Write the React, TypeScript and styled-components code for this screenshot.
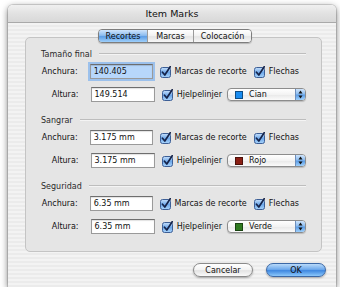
import React from 'react';
import styled, { createGlobalStyle } from 'styled-components';

const GlobalStyle = createGlobalStyle`
  html, body {
    margin: 0;
    padding: 0;
    background: #ffffff;
  }
  body {
    font-family: "DejaVu Sans", "Liberation Sans", sans-serif;
    font-size: 8px;
    color: #111;
  }
`;

const Window = styled.div`
  margin: 5px 0 0 8px;
  width: 328px;
  height: 282px;
  display: flex;
  flex-direction: column;
  border-radius: 5px 5px 0 0;
  box-shadow: 0 2px 7px rgba(0, 0, 0, 0.55), 0 0 0 1px rgba(0, 0, 0, 0.12);
  overflow: hidden;
`;

const TitleBar = styled.div`
  height: 17px;
  flex: 0 0 auto;
  display: flex;
  align-items: center;
  justify-content: center;
  font-size: 9.5px;
  background: linear-gradient(#f0f0f0, #e2e2e2 50%, #d8d8d8);
  border-bottom: 1px solid #a9a9a9;
`;

const Body = styled.div`
  flex: 1 0;
  display: flex;
  flex-direction: column;
  padding: 6px 14px 0 17px;
  background: repeating-linear-gradient(#f3f3f3 0 2px, #ebebeb 2px 4px);
`;

const TabBar = styled.div`
  display: flex;
  justify-content: center;
  margin-bottom: -6px;
  position: relative;
  z-index: 1;
  padding-left: 3px;
`;

const TabGroup = styled.div`
  display: flex;
  height: 12px;
  border: 1px solid #7d7d7d;
  border-radius: 4px;
  overflow: hidden;
  box-shadow: 0 1px 1px rgba(0, 0, 0, 0.2);
`;

const Tab = styled.div<{ $active?: boolean; $w: number }>`
  width: ${p => p.$w}px;
  display: flex;
  align-items: center;
  justify-content: center;
  font-size: 8px;
  border-left: 1px solid #9a9a9a;
  &:first-child { border-left: none; }
  background: ${p => p.$active
    ? 'linear-gradient(#cfe4fb, #8dbdf0 45%, #5c9de6 55%, #9fd0fb)'
    : 'linear-gradient(#ffffff, #f1f1f1 50%, #e4e4e4 55%, #f7f7f7)'};
`;

const Panel = styled.div`
  width: 297px;
  height: 215px;
  box-sizing: border-box;
  padding: 10px 15px 0 15px;
  background: #e5e5e5;
  border: 1px solid #c4c4c4;
  border-radius: 5px;
  display: flex;
  flex-direction: column;
  gap: 12px;
`;

const Group = styled.div`
  display: flex;
  flex-direction: column;
`;

const GroupHead = styled.div`
  height: 12px;
  display: flex;
  align-items: center;
  gap: 7px;
  color: #2a2a2a;
  margin-bottom: 4px;
`;

const Rule = styled.div`
  flex: 1 0;
  height: 1px;
  background: #bdbdbd;
  border-bottom: 1px solid #f4f4f4;
`;

const Row = styled.div`
  height: 15px;
  display: flex;
  align-items: center;
  & + & { margin-top: 8px; }
`;

const Label = styled.div`
  width: 38px;
  text-align: right;
  margin-right: 12px;
`;

const Field = styled.div<{ $focus?: boolean }>`
  width: 65px;
  height: 15px;
  box-sizing: border-box;
  display: flex;
  align-items: center;
  padding-left: 3px;
  border: 1px solid #9a9a9a;
  border-top-color: #6e6e6e;
  background: ${p => (p.$focus ? '#b7d7fb' : '#ffffff')};
  box-shadow: ${p => (p.$focus
    ? '0 0 0 2px #9cc1ec, inset 0 1px 1px rgba(0,0,0,0.15)'
    : 'inset 0 1px 1px rgba(0,0,0,0.12)')};
  margin-right: 7px;
`;

const CheckItem = styled.div`
  display: flex;
  align-items: center;
  gap: 3px;
  margin-right: 7px;
  white-space: nowrap;
`;

const Popup = styled.div`
  width: 80px;
  height: 13px;
  box-sizing: border-box;
  display: flex;
  align-items: center;
  border: 1px solid #8c8c8c;
  border-radius: 4px;
  overflow: hidden;
  background: linear-gradient(#ffffff, #f3f3f3 50%, #e9e9e9 55%, #fbfbfb);
  box-shadow: 0 1px 1px rgba(0, 0, 0, 0.18);
  margin-left: -2px;
`;

const Swatch = styled.div<{ $color: string }>`
  width: 8px;
  height: 8px;
  margin: 0 6px 0 7px;
  background: ${p => p.$color};
  border: 1px solid rgba(0, 0, 0, 0.45);
  box-sizing: border-box;
`;

const PopupText = styled.div`
  flex: 1 0;
`;

const PopupArrows = styled.div`
  width: 9px;
  height: 100%;
  display: flex;
  align-items: center;
  justify-content: center;
  border-left: 1px solid #6d8fbd;
  background: linear-gradient(#cfe4fb, #8dbdf0 45%, #5c9de6 55%, #9fd0fb);
`;

const Footer = styled.div`
  display: flex;
  justify-content: flex-end;
  gap: 13px;
  margin-top: 11px;
  margin-right: -4px;
`;

const Button = styled.div<{ $primary?: boolean }>`
  width: 58px;
  height: 12px;
  display: flex;
  align-items: center;
  justify-content: center;
  border-radius: 7px;
  border: 1px solid ${p => (p.$primary ? '#3b68a6' : '#8a8a8a')};
  background: ${p => p.$primary
    ? 'linear-gradient(#b9dafa, #6faaec 45%, #3f88e0 55%, #8cc8fb)'
    : 'linear-gradient(#ffffff, #f2f2f2 50%, #e3e3e3 55%, #fafafa)'};
  box-shadow: 0 1px 2px rgba(0, 0, 0, 0.3);
`;

function CheckBox() {
  return (
    <svg width="12" height="12" viewBox="0 0 12 12">
      <defs>
        <linearGradient id="cb" x1="0" y1="0" x2="0" y2="1">
          <stop offset="0" stopColor="#c7e0fb" />
          <stop offset="0.5" stopColor="#6ea8ea" />
          <stop offset="1" stopColor="#a9d4fb" />
        </linearGradient>
      </defs>
      <rect x="0.5" y="1.5" width="10" height="10" rx="2" fill="url(#cb)" stroke="#3d5f96" />
      <path d="M2.5 6.2 L4.8 9 L10.2 0.8" fill="none" stroke="#16244a" strokeWidth="1.7" strokeLinecap="round" strokeLinejoin="round" />
    </svg>
  );
}

function Arrows() {
  return (
    <svg width="5" height="9" viewBox="0 0 5 9">
      <path d="M2.5 0.5 L4.5 3.5 L0.5 3.5 Z" fill="#111" />
      <path d="M2.5 8.5 L4.5 5.5 L0.5 5.5 Z" fill="#111" />
    </svg>
  );
}

type SectionProps = {
  title: string;
  width: string;
  height: string;
  color: string;
  colorName: string;
  focus?: boolean;
};

function Section({ title, width, height, color, colorName, focus }: SectionProps) {
  return (
    <Group>
      <GroupHead>
        {title}
        <Rule />
      </GroupHead>
      <Row>
        <Label>Anchura:</Label>
        <Field $focus={focus}>{width}</Field>
        <CheckItem><CheckBox />Marcas de recorte</CheckItem>
        <CheckItem><CheckBox />Flechas</CheckItem>
      </Row>
      <Row>
        <Label>Altura:</Label>
        <Field>{height}</Field>
        <CheckItem><CheckBox />Hjelpelinjer</CheckItem>
        <Popup>
          <Swatch $color={color} />
          <PopupText>{colorName}</PopupText>
          <PopupArrows><Arrows /></PopupArrows>
        </Popup>
      </Row>
    </Group>
  );
}

function App() {
  return (
    <>
      <GlobalStyle />
      <Window>
        <TitleBar>Item Marks</TitleBar>
        <Body>
          <TabBar>
            <TabGroup>
              <Tab $active $w={48}>Recortes</Tab>
              <Tab $w={45}>Marcas</Tab>
              <Tab $w={57}>Colocación</Tab>
            </TabGroup>
          </TabBar>
          <Panel>
            <Section title="Tamaño final" width="140.405" height="149.514" color="#1a8cf0" colorName="Cian" focus />
            <Section title="Sangrar" width="3.175 mm" height="3.175 mm" color="#8a1f14" colorName="Rojo" />
            <Section title="Seguridad" width="6.35 mm" height="6.35 mm" color="#2f7a1f" colorName="Verde" />
          </Panel>
          <Footer>
            <Button>Cancelar</Button>
            <Button $primary>OK</Button>
          </Footer>
        </Body>
      </Window>
    </>
  );
}

export default App;
